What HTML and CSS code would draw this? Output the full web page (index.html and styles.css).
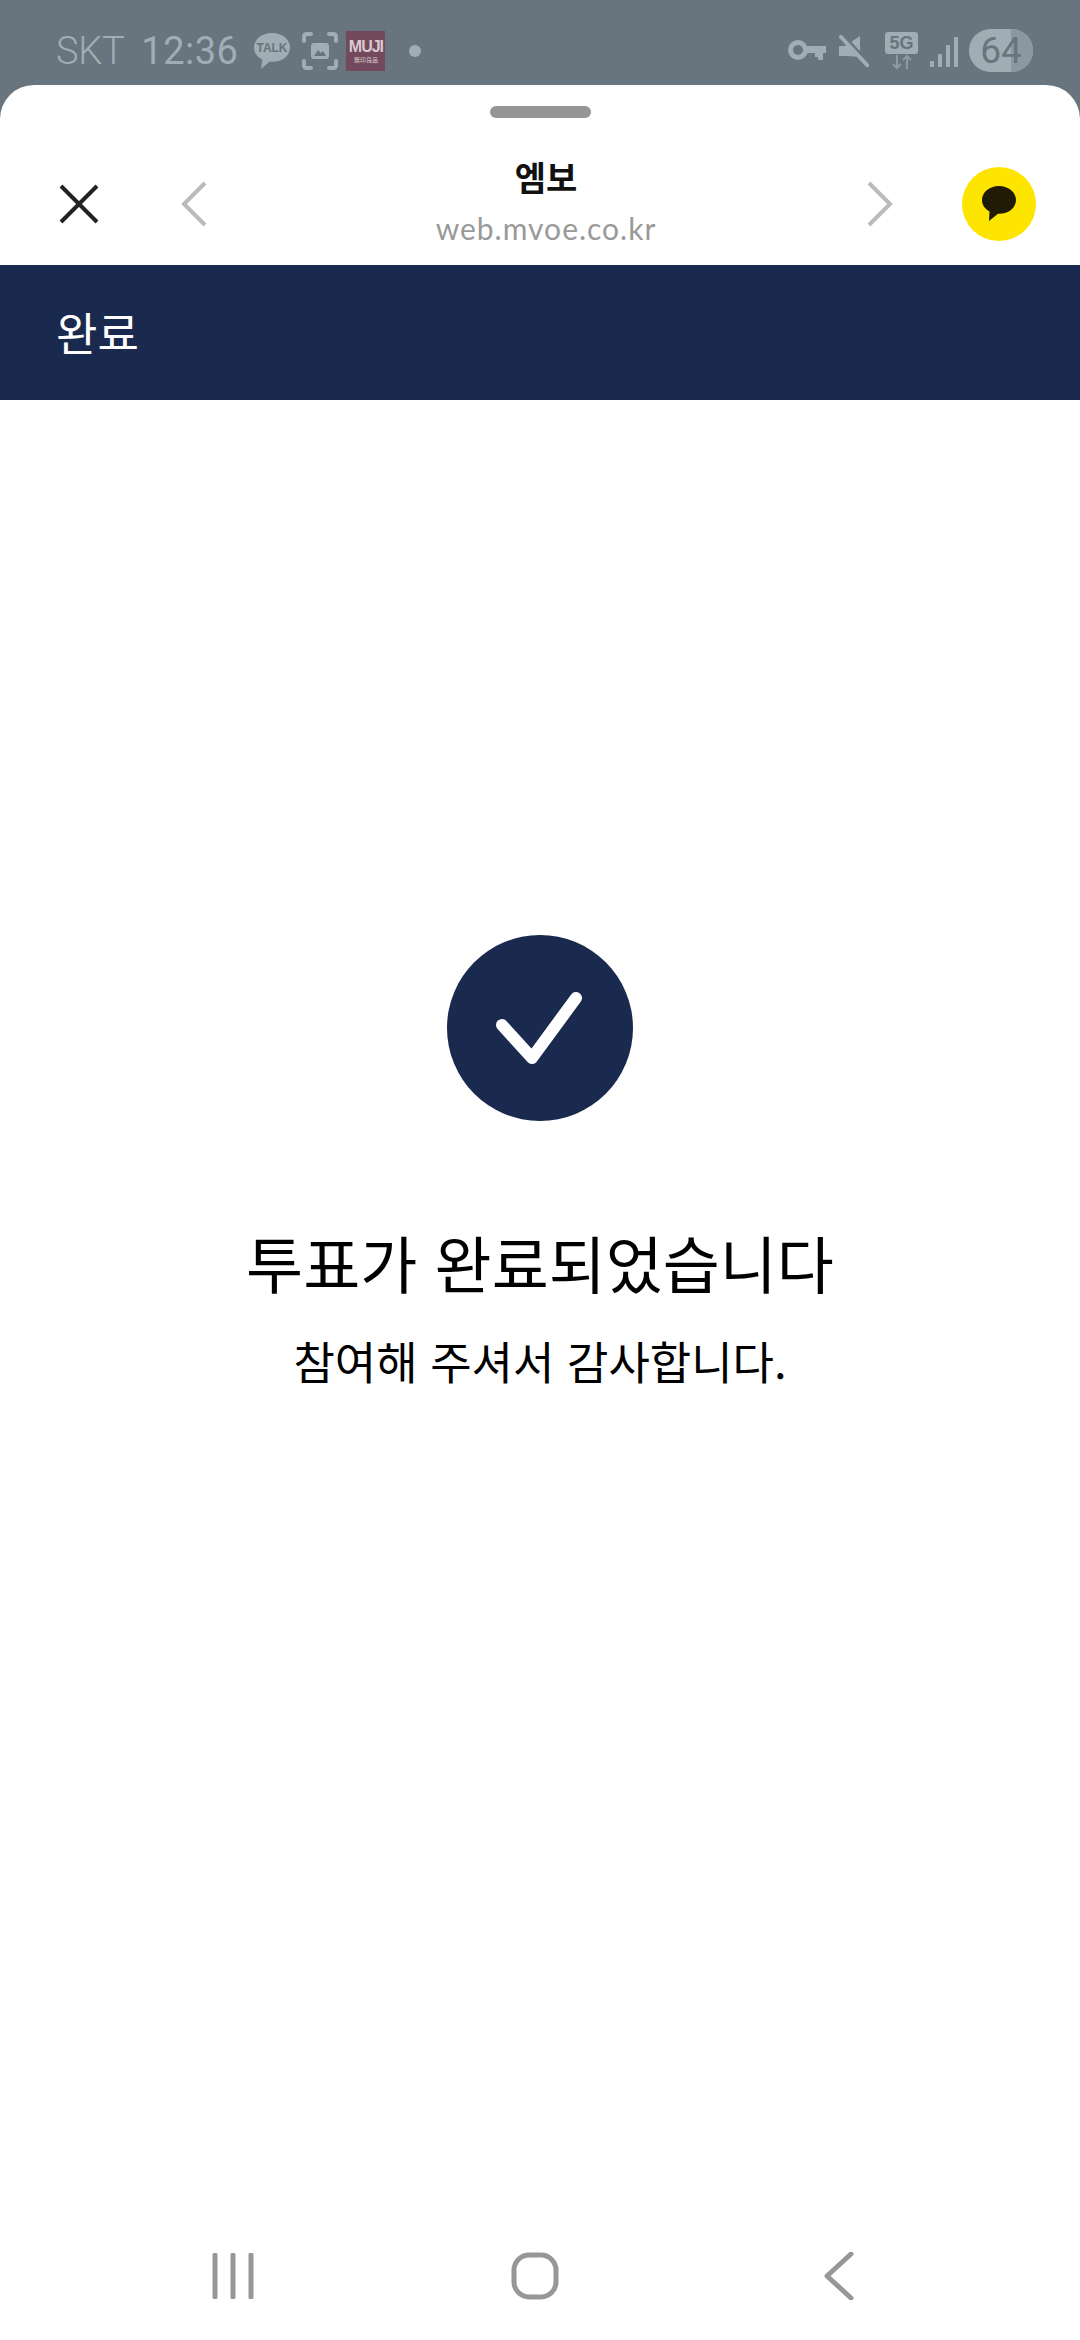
FILE: index.html
```html
<!DOCTYPE html>
<html lang="ko">
<head>
    <meta charset="UTF-8">
    <title>엠보</title>
    <link rel="stylesheet" href="styles.css">
</head>
<body>
    <div id="wrap">
        <div class="status">
            <div class="status-left">
                <span class="carrier">SKT</span>
                <span class="clock">12:36</span>
                <svg class="ic-talk" width="38" height="38" viewBox="0 0 38 38">
                    <path class="fill-dim" d="M19 1C8.500 1 1 7.500 1 15.500c0 5.500 3.500 9.800 8.500 12.300L8 37l8.500-7.300c.8.100 1.700.100 2.500.100 10.500 0 18-6.300 18-14.300S29.500 1 19 1z"/>
                    <text x="19" y="20" class="talk-text">TALK</text>
                </svg>
                <svg class="ic-shot" width="36" height="38" viewBox="0 0 36 38">
                    <path class="line-dim" d="M9 2H5Q2 2 2 5V9M27 2H31Q34 2 34 5V9M9 36H5Q2 36 2 33V29M27 36H31Q34 36 34 33V29"/>
                    <rect class="fill-dim" x="9" y="11" width="18" height="16" rx="3"/>
                    <path class="fill-bg" d="M12 24l4-6 3 3 2-2 3 5z"/>
                </svg>
                <div class="muji">
                    <span class="muji-en">MUJI</span>
                    <span class="muji-cn">無印良品</span>
                </div>
                <span class="dot"></span>
            </div>
            <div class="status-right">
                <svg class="ic-key" width="38" height="22" viewBox="0 0 38 22">
                    <circle class="line-key" cx="10" cy="10" r="7.500"/>
                    <path class="fill-dim" d="M17 6h21v7h-3v7h-5v-3h-3v-4H17z"/>
                </svg>
                <svg class="ic-mute" width="30" height="32" viewBox="0 0 30 32">
                    <path class="fill-dim" d="M0 11h6L21 1v21L8 21H0z"/>
                    <path class="line-cut" d="M2 -1L30 30"/>
                    <path class="line-dim" d="M2 2L29 31"/>
                </svg>
                <div class="net">
                    <span class="net-5g">5G</span>
                    <svg width="22" height="16" viewBox="0 0 22 16">
                        <path class="line-thin" d="M6 1v13M2 10l4 4 4-4M16 15V2M12 6l4-4 4 4"/>
                    </svg>
                </div>
                <div class="signal">
                    <span class="bar b1"></span>
                    <span class="bar b2"></span>
                    <span class="bar b3"></span>
                    <span class="bar b4"></span>
                </div>
                <div class="battery">
                    <span class="battery-num">64</span>
                    <span class="battery-empty"></span>
                </div>
            </div>
        </div>

        <div class="sheet">
            <div class="handle"></div>
            <div class="topbar">
                <svg class="ic-close" width="40" height="40" viewBox="0 0 40 40">
                    <path d="M2 2L38 38M38 2L2 38"/>
                </svg>
                <svg class="ic-prev" width="26" height="46" viewBox="0 0 26 46">
                    <path d="M24 2L3 23L24 44"/>
                </svg>
                <div class="site">
                    <div class="site-name">엠보</div>
                    <div class="site-url">web.mvoe.co.kr</div>
                </div>
                <svg class="ic-next" width="26" height="46" viewBox="0 0 26 46">
                    <path d="M2 2L23 23L2 44"/>
                </svg>
                <div class="kakao">
                    <svg width="36" height="38" viewBox="0 0 36 38">
                        <path d="M18 1C8 1 1 7.500 1 15c0 5 3 9 7.500 11.500L8 36l9-7.200h1c10 0 17-6.300 17-13.800S28 1 18 1z"/>
                    </svg>
                </div>
            </div>
            <div class="title-bar">완료</div>

            <div class="content">
                <div class="check">
                    <svg width="90" height="78" viewBox="0 0 90 78">
                        <path d="M7 36L37 69L81 9"/>
                    </svg>
                </div>
                <h1>투표가 완료되었습니다</h1>
                <p>참여해 주셔서 감사합니다.</p>
            </div>

            <div class="navbar">
                <svg width="42" height="46" viewBox="0 0 42 46">
                    <path d="M3 2V44M21 2V44M39 2V44"/>
                </svg>
                <svg class="nav-home" width="48" height="48" viewBox="0 0 48 48">
                    <rect x="3" y="3" width="42" height="42" rx="15"/>
                </svg>
                <svg class="nav-back" width="32" height="48" viewBox="0 0 32 48">
                    <path d="M29 2L5 24L29 46"/>
                </svg>
            </div>
        </div>
    </div>
</body>
</html>
```

FILE: styles.css
```css
*{margin: 0;padding: 0;box-sizing: border-box;}
body{font-family: "Noto Sans CJK KR", "Noto Sans", sans-serif;background: #68747e;}
#wrap{width: 1080px;height: 2340px;display: flex;flex-direction: column;overflow: hidden;}

.status{height: 85px;flex: none;display: flex;justify-content: space-between;align-items: center;padding: 16px 47px 0 56px;color: #a1adb5;}
.status-left{display: flex;align-items: center;}
.status-right{display: flex;align-items: center;gap: 16px;}
.carrier{font: 300 38px Roboto, sans-serif;letter-spacing: -.3px;}
.clock{font: 400 38px Roboto, sans-serif;margin-left: 17px;letter-spacing: .5px;}
.ic-talk{margin-left: 15px;}
.ic-shot{margin-left: 11px;}
.ic-key{margin-right: -3px;}
.talk-text{font: 700 12px "Liberation Sans", sans-serif;fill: #68747e;text-anchor: middle;}
.fill-dim{fill: #a1adb5;}
.fill-bg{fill: #68747e;}
.line-dim{fill: none;stroke: #a1adb5;stroke-width: 4;stroke-linecap: round;}
.line-key{fill: none;stroke: #a1adb5;stroke-width: 5;}
.line-cut{fill: none;stroke: #68747e;stroke-width: 5;}
.line-thin{fill: none;stroke: #8f9ba4;stroke-width: 2;}

.muji{width: 39px;height: 40px;margin-left: 8px;background: #734a5b;color: #d9c9cf;display: flex;flex-direction: column;align-items: center;justify-content: center;line-height: 1;}
.muji-en{font: 700 16px "Liberation Sans", sans-serif;letter-spacing: -1px;}
.muji-cn{font-size: 6px;margin-top: 1px;}
.dot{width: 12px;height: 12px;margin-left: 24px;border-radius: 50%;background: #a1adb5;}

.net{display: flex;flex-direction: column;align-items: center;width: 33px;}
.net-5g{width: 33px;height: 22px;border-radius: 3px;background: #a1adb5;color: #68747e;font: 700 18px/22px "Liberation Sans", sans-serif;text-align: center;}
.signal{display: flex;align-items: flex-end;gap: 4px;height: 32px;margin-left: -4px;}
.bar{width: 4px;background: #a1adb5;border-radius: 1px;}
.b1{height: 6px;}
.b2{height: 13px;}
.b3{height: 22px;}
.b4{height: 30px;}
.battery{width: 64px;height: 43px;border-radius: 22px;background: #a1adb5;position: relative;overflow: hidden;margin-left: -5px;display: flex;align-items: center;justify-content: center;}
.battery-num{font: 400 37px Roboto, sans-serif;color: #68747e;position: relative;z-index: 1;}
.battery-empty{position: absolute;right: 0;top: 0;bottom: 0;width: 22px;background: #8c98a1;}

.sheet{flex: 1;background: #fff;border-radius: 34px 34px 0 0;display: flex;flex-direction: column;}
.handle{width: 101px;height: 12px;margin: 21px auto 0;border-radius: 6px;background: #959595;}

.topbar{height: 147px;flex: none;display: flex;align-items: center;padding: 25px 44px 0 59px;}
.ic-close path{stroke: #222;stroke-width: 4;fill: none;}
.ic-prev{margin-left: 82px;}
.ic-prev path,.ic-next path{stroke: #bbb;stroke-width: 4;fill: none;}
.site{flex: 1;text-align: center;margin-left: 18px;}
.site-name{font-size: 34px;font-weight: 700;line-height: 40px;color: #111;}
.site-url{font: 400 30px/46px Lato, sans-serif;margin-top: 8px;color: #999;letter-spacing: 1px;}
.kakao{width: 74px;height: 74px;margin-left: 69px;border-radius: 50%;background: #fee500;display: flex;align-items: center;justify-content: center;}
.kakao path{fill: #211a04;}

.title-bar{height: 135px;flex: none;padding-left: 56px;background: #1a2a4e;color: #fff;font-size: 45px;line-height: 133px;}

.content{flex: 1;display: flex;flex-direction: column;align-items: center;padding-top: 535px;}
.check{width: 186px;height: 186px;border-radius: 50%;background: #1a2a4e;display: flex;align-items: center;justify-content: center;}
.check path{fill: none;stroke: #fff;stroke-width: 12;stroke-linecap: round;stroke-linejoin: round;}
.content h1{font-size: 62px;font-weight: 400;line-height: 90px;margin-top: 96px;color: #000;}
.content p{font-size: 45px;line-height: 66px;margin-top: 21px;color: #000;}

.navbar{height: 128px;flex: none;display: flex;align-items: center;padding-left: 212px;}
.nav-home{margin-left: 257px;}
.nav-back{margin-left: 263px;}
.navbar path,.navbar rect{fill: none;stroke: #979797;stroke-width: 5;stroke-linecap: round;stroke-linejoin: round;}
```
